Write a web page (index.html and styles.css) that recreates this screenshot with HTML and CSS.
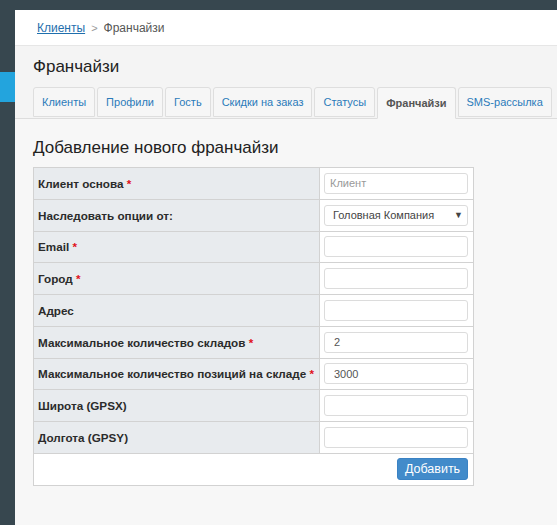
FILE: index.html
```html
<!DOCTYPE html>
<html lang="ru">
<head>
<meta charset="utf-8">
<title>Франчайзи</title>
<link rel="stylesheet" href="styles.css">
</head>
<body>
<div class="topbar"></div>
<div class="layout">
  <aside class="sidebar">
    <div class="side-mark"></div>
    <div class="side-active"></div>
  </aside>
  <main class="main">
    <nav class="breadcrumb">
      <a href="#" class="crumb-link">Клиенты</a>
      <span class="crumb-sep">&gt;</span>
      <span class="crumb-current">Франчайзи</span>
    </nav>
    <header class="page-head">
      <h1 class="page-title">Франчайзи</h1>
      <ul class="tabs">
        <li class="tab"><a href="#">Клиенты</a></li>
        <li class="tab"><a href="#">Профили</a></li>
        <li class="tab"><a href="#">Гость</a></li>
        <li class="tab"><a href="#">Скидки на заказ</a></li>
        <li class="tab"><a href="#">Статусы</a></li>
        <li class="tab tab-active"><a href="#">Франчайзи</a></li>
        <li class="tab"><a href="#">SMS-рассылка</a></li>
      </ul>
    </header>
    <section class="content">
      <h2 class="section-title">Добавление нового франчайзи</h2>
      <table class="form-table">
        <tr><th>Клиент основа <span class="req">*</span></th><td><input class="field ph" type="text" placeholder="Клиент"></td></tr>
        <tr><th>Наследовать опции от:</th><td><div class="select-wrap"><select class="field select"><option>Головная Компания</option></select></div></td></tr>
        <tr><th>Email <span class="req">*</span></th><td><input class="field" type="text"></td></tr>
        <tr><th>Город <span class="req">*</span></th><td><input class="field" type="text"></td></tr>
        <tr><th>Адрес</th><td><input class="field" type="text"></td></tr>
        <tr><th>Максимальное количество складов <span class="req">*</span></th><td><input class="field" type="text" value="2"></td></tr>
        <tr><th>Максимальное количество позиций на складе <span class="req">*</span></th><td><input class="field" type="text" value="3000"></td></tr>
        <tr><th>Широта (GPSX)</th><td><input class="field" type="text"></td></tr>
        <tr><th>Долгота (GPSY)</th><td><input class="field" type="text"></td></tr>
        <tr class="footer-row"><td colspan="2"><button class="btn" type="button">Добавить</button></td></tr>
      </table>
    </section>
  </main>
</div>
</body>
</html>
```

FILE: styles.css
```css
* { box-sizing: border-box; }
html, body { margin: 0; padding: 0; }
body {
  font-family: "Liberation Sans", Arial, sans-serif;
  background: #f6f6f6;
  color: #333;
  height: 525px;
  overflow: hidden;
}
.topbar { height: 10px; background: #37474f; }
.layout { display: flex; height: 515px; }
.sidebar { width: 15px; flex: none; background: #37474f; }
.side-mark { height: 62px; }
.side-active { height: 30px; background: #23a4dd; }
.main { flex: 1; min-width: 0; display: flex; flex-direction: column; }

.breadcrumb {
  height: 36px;
  background: #fff;
  border-bottom: 1px solid #e6e6e6;
  display: flex;
  align-items: center;
  padding: 0 0 0 22px;
  font-size: 12px;
  gap: 6px;
}
.crumb-link { color: #1f6fad; text-decoration: underline; }
.crumb-sep { color: #999; font-size: 11px; }
.crumb-current { color: #555; }

.page-head {
  background: #f4f4f4;
  padding: 12px 0 0 18px;
  border-bottom: 1px solid #ddd;
}
.page-title {
  margin: 0 0 11px;
  font-size: 17px;
  font-weight: normal;
  color: #222;
  line-height: 18px;
}
.tabs { list-style: none; margin: 0 0 -1px; padding: 0; display: flex; gap: 2px; white-space: nowrap; }
.tab a {
  display: block;
  height: 30px;
  line-height: 28px;
  padding: 0 8px;
  font-size: 11px;
  color: #2b7bba;
  text-decoration: none;
  border: 1px solid #dedede;
  border-radius: 3px 3px 0 0;
  background: #f6f6f6;
  margin-bottom: 1px;
}
.tab-active a {
  height: 32px;
  line-height: 30px;
  margin-bottom: 0;
  font-weight: bold;
  color: #555;
  border-bottom-color: #f7f7f7;
  background: #f7f7f7;
}

.content { background: #f7f7f7; flex: 1; padding: 19px 0 0 18px; }
.section-title {
  margin: 0 0 9px;
  font-size: 17px;
  font-weight: normal;
  color: #222;
  line-height: 20px;
}
.form-table {
  border-collapse: collapse;
  width: 441px;
  border: 1px solid #d2d2d2;
  background: #fff;
}
.form-table th, .form-table td { border: 1px solid #d2d2d2; height: 31.75px; padding: 0; }
.form-table th {
  background: #e8ebee;
  text-align: left;
  font-size: 11.7px;
  font-weight: bold;
  color: #2b2b2b;
  padding-left: 4px;
  width: 288px;
  white-space: nowrap;
}
.req { color: #e0101a; }
.form-table td { padding: 0 5px 0 4px; }
.field {
  display: block;
  width: 144px;
  height: 21px;
  border: 1px solid #dcdcdc;
  border-radius: 3px;
  background: #fff;
  font-family: "Liberation Sans", Arial, sans-serif;
  font-size: 11px;
  color: #555;
  padding: 0 9px;
  outline: none;
}
.ph { padding-left: 5px; }
.field::placeholder { color: #999; }
.select-wrap { position: relative; width: 144px; }
.select { appearance: none; -webkit-appearance: none; padding-left: 8px; color: #444; }
.select-wrap::after {
  content: "▼";
  position: absolute;
  right: 5px;
  top: 5px;
  font-size: 9px;
  color: #444;
  pointer-events: none;
}
.footer-row td { text-align: right; padding-right: 5px; }
.btn {
  width: 71px;
  height: 22px;
  border: 1px solid #3a82c4;
  border-radius: 3px;
  background: #428bca;
  color: #fff;
  font-family: "Liberation Sans", Arial, sans-serif;
  font-size: 12.5px;
  padding: 0;
  vertical-align: middle;
}
```
